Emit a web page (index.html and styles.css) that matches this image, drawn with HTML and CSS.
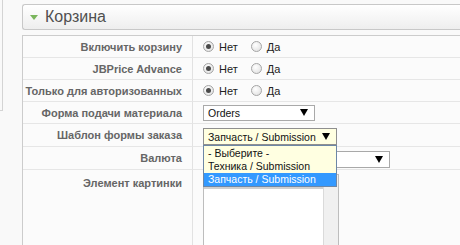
FILE: index.html
```html
<!DOCTYPE html>
<html lang="ru">

<head>
    <meta charset="UTF-8" />
    <meta name="viewport" content="width=device-width, initial-scale=1.0" />
    <title>Корзина</title>
    <link rel="stylesheet" href="styles.css">
</head>

<body>
    <div class="page">
        <div class="sidebar-edge"></div>

        <div class="main">
            <div class="panel-header">
                <span class="toggle"></span>
                <span class="panel-title">Корзина</span>
            </div>

            <div class="form-table">
                <div class="key">Включить корзину</div>
                <div class="value">
                    <span class="radio checked"></span><span class="radio-label">Нет</span>
                    <span class="radio"></span><span class="radio-label">Да</span>
                </div>

                <div class="key">JBPrice Advance</div>
                <div class="value">
                    <span class="radio checked"></span><span class="radio-label">Нет</span>
                    <span class="radio"></span><span class="radio-label">Да</span>
                </div>

                <div class="key">Только для авторизованных</div>
                <div class="value">
                    <span class="radio checked"></span><span class="radio-label">Нет</span>
                    <span class="radio"></span><span class="radio-label">Да</span>
                </div>

                <div class="key">Форма подачи материала</div>
                <div class="value">
                    <div class="select select--orders"><span>Orders</span><span class="arrow"></span></div>
                </div>

                <div class="key tall">Шаблон формы заказа</div>
                <div class="value tall">
                    <div class="select-wrap">
                        <div class="select select--template focused"><span>Запчасть / Submission</span><span class="arrow"></span></div>
                        <ul class="dropdown">
                            <li>- Выберите -</li>
                            <li>Техника / Submission</li>
                            <li class="selected">Запчасть / Submission</li>
                        </ul>
                    </div>
                </div>

                <div class="key tall">Валюта</div>
                <div class="value tall">
                    <div class="select select--currency"><span></span><span class="arrow"></span></div>
                </div>

                <div class="key last">Элемент картинки</div>
                <div class="value last">
                    <div class="listbox">
                        <div class="listbox-items"></div>
                        <div class="listbox-scroll"></div>
                    </div>
                </div>
            </div>
        </div>
    </div>
</body>

</html>
```

FILE: styles.css
```css
body {
    margin: 0;
    padding: 0;
    background-color: #f9f9f9;
    font-family: "Liberation Sans", Arial, sans-serif;
    overflow: hidden;
}

.page {
    display: flex;
    align-items: flex-start;
    height: 245px;
}

/* edge of the left column */
.sidebar-edge {
    width: 2px;
    height: 110px;
    border-right: 1px solid #d4d4d4;
    border-bottom: 1px solid #d4d4d4;
}

.main {
    flex: 1;
    padding: 4px 0 0 19px;
}

.panel-header {
    display: flex;
    align-items: center;
    gap: 7px;
    height: 24px;
    padding-left: 7px;
    border: 1px solid #c8c8c8;
    border-right: none;
    border-radius: 3px 0 0 3px;
    background: linear-gradient(#ffffff, #eeeeee);
}

.toggle {
    width: 0;
    height: 0;
    border-left: 4px solid transparent;
    border-right: 4px solid transparent;
    border-top: 5px solid #7ab55c;
    margin-top: 1px;
}

.panel-title {
    font-size: 16px;
    color: #505050;
}

.form-table {
    display: grid;
    grid-template-columns: 170px 1fr;
    margin-top: 5px;
    border-top: 1px solid #cccccc;
    border-left: 1px solid #cccccc;
    background-color: #fbfbfb;
}

.key,
.value {
    height: 21px;
    border-bottom: 1px solid #e6e6e6;
    display: flex;
    align-items: center;
}

.key {
    justify-content: flex-end;
    padding-right: 10px;
    border-right: 1px solid #e2e2e2;
    font-size: 11px;
    font-weight: bold;
    color: #666;
    white-space: nowrap;
}

.value {
    padding-left: 10px;
    font-size: 11px;
    color: #222;
}

.tall {
    height: 22px;
}

.last {
    border-bottom: none;
    align-items: flex-start;
}

.key.last {
    padding-top: 7px;
    height: 69px;
}

.value.last {
    padding-top: 4px;
    height: 72px;
}

/* radios */
.radio {
    box-sizing: border-box;
    width: 11px;
    height: 11px;
    border: 1px solid #a5a5a5;
    border-radius: 50%;
    background: radial-gradient(circle at 40% 35%, #ffffff, #dcdcdc);
    display: inline-flex;
    align-items: center;
    justify-content: center;
}

.radio.checked::after {
    content: "";
    width: 5px;
    height: 5px;
    border-radius: 50%;
    background-color: #4a4a4a;
}

.radio-label {
    margin: 0 13px 0 5px;
}

/* fake selects */
.select {
    box-sizing: border-box;
    display: flex;
    align-items: center;
    justify-content: space-between;
    padding: 0 6px 0 4px;
    border: 1px solid #a9a9a9;
    background-color: #fff;
    font-size: 10.5px;
    color: #111;
}

.select--orders {
    width: 112px;
    height: 16px;
}

.select--template {
    width: 134px;
    height: 17px;
    margin-top: 3px;
}

.select--currency {
    width: 187px;
    height: 17px;
    margin-top: 2px;
}

.focused {
    background-color: #ffffe1;
    border-color: #8f8f8f;
}

.arrow {
    width: 0;
    height: 0;
    border-left: 4px solid transparent;
    border-right: 4px solid transparent;
    border-top: 7px solid #000;
}

.select-wrap {
    position: relative;
}

.dropdown {
    position: absolute;
    top: 100%;
    left: 0;
    z-index: 2;
    box-sizing: border-box;
    width: 134px;
    margin: 0;
    padding: 1px 0 0;
    list-style: none;
    border: 1px solid #6d87a6;
    background-color: #ffffe1;
    font-size: 10.5px;
    color: #111;
}

.dropdown li {
    height: 13px;
    line-height: 13px;
    padding-left: 4px;
}

.dropdown li.selected {
    background-color: #3399ff;
    color: #fff;
}

/* image element list */
.listbox {
    box-sizing: border-box;
    display: flex;
    width: 136px;
    height: 72px;
    border: 1px solid #bdbdbd;
    border-bottom: none;
}

.listbox-items {
    flex: 1;
    background-color: #fff;
    padding-top: 12px;
}

.listbox-items::before {
    content: "";
    display: block;
    height: 2px;
    background-color: #cfcfcf;
}

.listbox-scroll {
    width: 14px;
    background-color: #f0f0f0;
    border-left: 1px solid #dadada;
}
```
